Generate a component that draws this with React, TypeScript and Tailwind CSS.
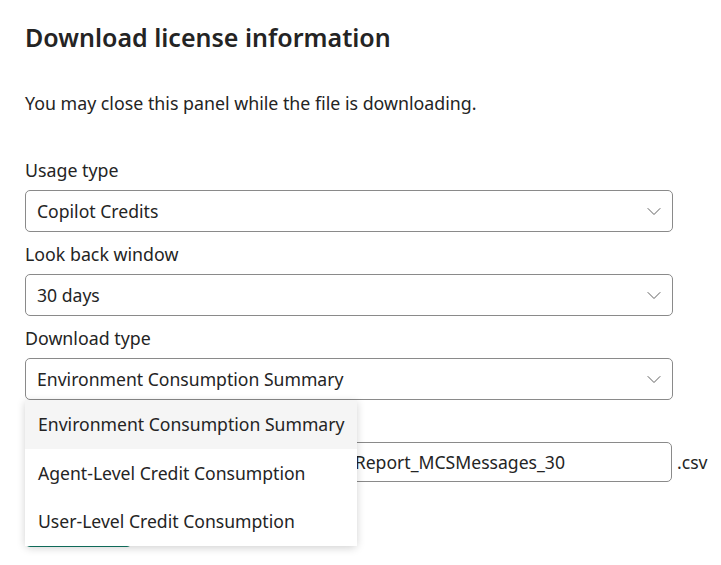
import { useState } from 'react';

const font = { fontFamily: '"Noto Sans", "Open Sans", sans-serif' };

function Chevron() {
  return (
    <svg width="16" height="16" viewBox="0 0 16 16" fill="none" className="text-[#616161]">
      <path d="M2 5.5 L8 11.5 L14 5.5" stroke="currentColor" strokeWidth="1" strokeLinecap="round" strokeLinejoin="round" />
    </svg>
  );
}

function SelectBox({ value }: { value: string }) {
  return (
    <div className="flex items-center justify-between h-[42px] w-[648px] border border-[#8a8a8a] rounded-[5px] pl-[11px] pr-[10px] bg-white">
      <span className="text-[17.6px] text-[#242424]">{value}</span>
      <Chevron />
    </div>
  );
}

function Field({ label, children }: { label: string; children: React.ReactNode }) {
  return (
    <div className="flex flex-col">
      <label className="h-6 leading-6 mb-2 text-[17.8px] text-[#242424]">{label}</label>
      {children}
    </div>
  );
}

export default function App() {
  const [selected] = useState(`Environment Consumption Summary`);
  const options = [
    `Environment Consumption Summary`,
    `Agent-Level Credit Consumption`,
    `User-Level Credit Consumption`,
  ];

  return (
    <div className="w-[721px] h-[565px] bg-white pl-[25px] pt-[21px] overflow-hidden" style={font}>
      <h1 className="text-[25px] leading-8 font-semibold text-[#242424]">Download license information</h1>
      <p className="mt-[38px] text-[17.8px] leading-6 text-[#242424]">
        You may close this panel while the file is downloading.
      </p>
      <div className="mt-[43px] flex flex-col gap-[10px]">
        <Field label="Usage type">
          <SelectBox value="Copilot Credits" />
        </Field>
        <Field label="Look back window">
          <SelectBox value="30 days" />
        </Field>
        <div className="relative">
          <Field label="Download type">
            <SelectBox value={selected} />
          </Field>
          <div className="absolute left-0 top-[74px] z-10 w-[332px] bg-white rounded-b-[5px] shadow-[0_2px_8px_rgba(0,0,0,0.18)] flex flex-col">
            {options.map((o, i) => (
              <div
                key={o}
                className={`h-[48.5px] flex items-center pl-[13px] text-[17.6px] text-[#242424] ${i === 0 ? `bg-[#f5f5f5]` : `bg-white`}`}
              >
                {o}
              </div>
            ))}
          </div>
        </div>
        <Field label="File name">
          <div className="flex items-center">
            <div className="h-[40px] w-[647px] border border-[#8a8a8a] rounded-[5px] pl-[8px] flex items-center overflow-hidden">
              <span className="text-[17.6px] text-[#242424] whitespace-nowrap">Environment_Consumption_Summary_Report_MCSMessages_30</span>
            </div>
            <span className="ml-[5px] text-[17.6px] text-[#242424]">.csv</span>
          </div>
        </Field>
      </div>
      <button className="mt-[33px] h-8 w-[107px] rounded-[5px] bg-[#117865] text-white text-[15px] font-semibold">
        Download
      </button>
    </div>
  );
}
